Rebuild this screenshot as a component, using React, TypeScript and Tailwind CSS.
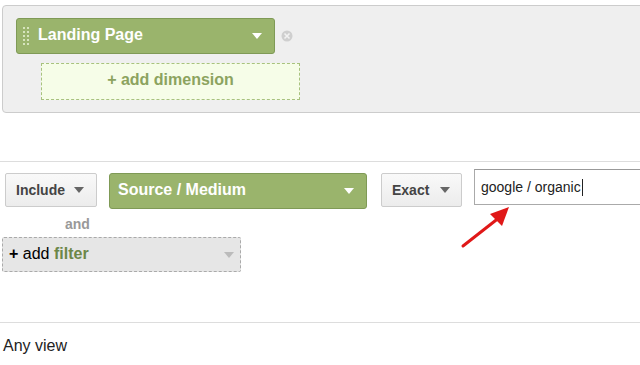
import React from 'react';

const font = { fontFamily: '"Liberation Sans", Arial, sans-serif' };

function Caret({ color = '#fff' }: { color?: string }) {
  return (
    <svg width="10" height="6" viewBox="0 0 10 6">
      <path d="M0 0h10L5 6z" fill={color} />
    </svg>
  );
}

function Grip() {
  return (
    <svg width="8" height="20" viewBox="0 0 8 20">
      {[0, 1, 2, 3, 4].map((r) =>
        [0, 1].map((c) => (
          <rect key={`${r}-${c}`} x={1 + c * 4} y={1 + r * 4} width="2" height="2" fill="#d6e4bd" />
        ))
      )}
    </svg>
  );
}

function CloseIcon() {
  return (
    <svg width="12" height="12" viewBox="0 0 12 12">
      <circle cx="6" cy="6" r="5.5" fill="#cfcfcf" />
      <path d="M3.5 3.5l5 5M8.5 3.5l-5 5" stroke="#f2f2f2" strokeWidth="1.6" />
    </svg>
  );
}

export default function App() {
  return (
    <div className="w-[640px] h-[365px] overflow-hidden bg-white text-[#222]" style={font}>
      {/* Dimension panel */}
      <div className="mt-[5px] ml-[2px] mr-[-12px] h-[108px] bg-[#efefef] border border-[#cccccc] rounded-l-[4px] pt-[12px] pl-[13px]">
        <div className="flex items-center">
          <div className="w-[259px] h-[36px] bg-[#9ab46c] border border-[#7f9a56] rounded-[3px] flex items-center pl-[5px] pr-[12px]">
            <Grip />
            <span className="ml-[8px] -mt-[2px] text-white font-bold text-[16px] flex-1">Landing Page</span>
            <Caret />
          </div>
          <div className="ml-[6px]">
            <CloseIcon />
          </div>
        </div>
        <div className="mt-[9px] ml-[25px] w-[259px] h-[37px] bg-[#f6fde8] border border-dashed border-[#a8c27e] flex items-center justify-center text-[16px] font-bold text-[#8ca35f]">
          <span className="-mt-[3px]">+ add dimension</span>
        </div>
      </div>

      {/* Filter area */}
      <div className="mt-[48px] border-t border-[#dddddd] pt-[7px]">
        <div className="relative flex items-start">
          <div className="ml-[5px] mt-[4px] w-[92px] h-[34px] bg-gradient-to-b from-[#f9f9f9] to-[#ececec] border border-[#cccccc] rounded-[2px] flex items-center justify-between pl-[10px] pr-[12px] text-[14px] font-bold text-[#444]">
            <span className="mt-[1px]">Include</span>
            <Caret color="#666" />
          </div>
          <div className="ml-[12px] mt-[4px] w-[258px] h-[36px] bg-[#9ab46c] border border-[#7f9a56] rounded-[3px] flex items-center justify-between pl-[8px] pr-[12px] text-white font-bold text-[16px]">
            <span className="-mt-[3px]">Source / Medium</span>
            <Caret />
          </div>
          <div className="ml-[14px] mt-[4px] w-[81px] h-[34px] bg-gradient-to-b from-[#f9f9f9] to-[#ececec] border border-[#cccccc] rounded-[2px] flex items-center justify-between pl-[10px] pr-[11px] text-[14px] font-bold text-[#444]">
            <span className="mt-[1px]">Exact</span>
            <Caret color="#666" />
          </div>
          <div className="ml-[12px] flex-1 mr-[-20px] h-[36px] border border-[#aaaaaa] border-t-[#999999] bg-white flex items-center pl-[6px] text-[14px] text-[#222]">
            <span>google / organic</span>
            <span className="w-px h-[17px] bg-[#222] ml-px" />
          </div>
          <svg className="absolute left-[458px] top-[36px]" width="56" height="46" viewBox="0 0 56 46">
            <path d="M5 41L42 12" stroke="#e01818" strokeWidth="3" strokeLinecap="round" />
            <path d="M51 2L32 9L44 21z" fill="#e01818" />
          </svg>
        </div>
        <div className="ml-[65px] mt-[5px] text-[14px] font-bold text-[#999]">and</div>
        <div className="ml-[2px] mt-[2px] w-[239px] h-[35px] bg-[#e6e6e6] border border-dashed border-[#aaaaaa] rounded-[2px] flex items-center justify-between pl-[6px] pr-[6px] text-[16px]">
          <span className="-mt-[2px]">
            <b className="text-black">+</b> <span className="text-black">add</span>{' '}
            <b className="text-[#6c8748]">filter</b>
          </span>
          <Caret color="#bbbbbb" />
        </div>
      </div>

      {/* View */}
      <div className="mt-[50px] border-t border-[#dddddd] pt-[11px] pl-[3px] text-[16px] text-[#222]">Any view</div>
    </div>
  );
}
